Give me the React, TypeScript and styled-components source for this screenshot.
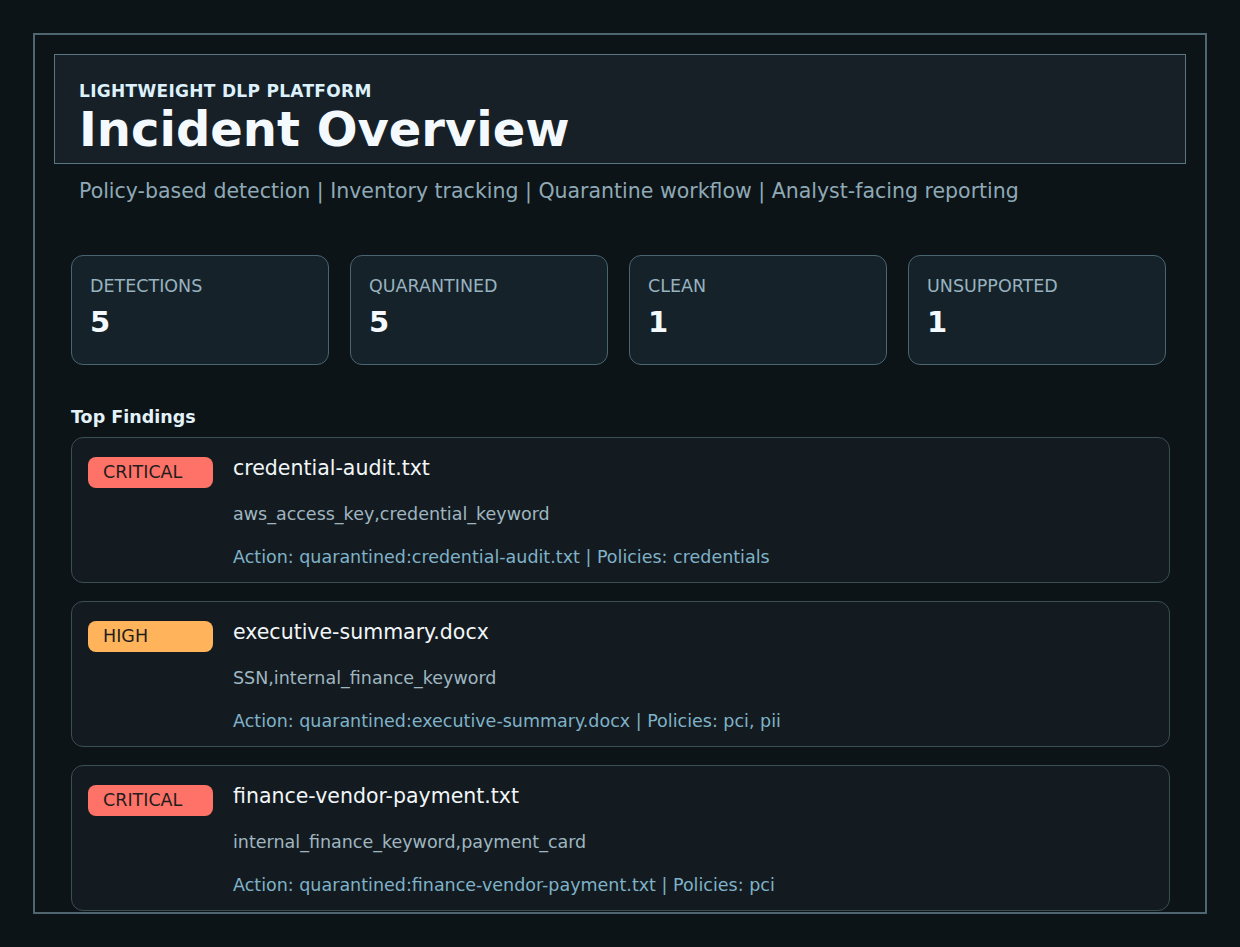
import React from "react";
import styled, { createGlobalStyle } from "styled-components";

const Global = createGlobalStyle`
  html, body { margin: 0; background: #0c1417; }
  body { font-family: "DejaVu Sans", "Noto Sans", sans-serif; }
`;

const Page = styled.div`
  padding: 33px;
  box-sizing: border-box;
`;

const Frame = styled.div`
  box-sizing: border-box;
  height: 881px;
  border: 2px solid #4f6570;
  padding: 19px 19px 0;
  overflow: hidden;
  background: #0c1417;
`;

const Header = styled.header`
  box-sizing: border-box;
  height: 110px;
  background: #172027;
  border: 1px solid #5a7682;
  padding: 25px 24px 0;
`;

const Eyebrow = styled.div`
  font-size: 17px;
  font-weight: bold;
  color: #dcf1fb;
  letter-spacing: 0.3px;
  line-height: 22px;
`;

const Title = styled.h1`
  margin: 0;
  font-size: 48px;
  line-height: 54px;
  font-weight: bold;
  color: #f3f9fc;
`;

const Sub = styled.p`
  margin: 14px 0 0 25px;
  font-size: 20.5px;
  line-height: 26px;
  color: #8fa9b6;
`;

const Body = styled.div`
  padding: 0 17px;
`;

const Stats = styled.div`
  display: grid;
  grid-template-columns: repeat(4, 258px);
  gap: 21px;
  margin-top: 51px;
`;

const Stat = styled.div`
  box-sizing: border-box;
  height: 110px;
  background: #15222a;
  border: 1px solid #4a6470;
  border-radius: 12px;
  padding: 18px 18px 0;
`;

const StatLabel = styled.div`
  font-size: 17.5px;
  line-height: 24px;
  color: #98b2bf;
`;

const StatValue = styled.div`
  font-size: 29px;
  font-weight: bold;
  color: #f3f9fc;
  line-height: 36px;
  margin-top: 6px;
`;

const SectionTitle = styled.h2`
  margin: 41px 0 9px;
  font-size: 17.5px;
  line-height: 22px;
  font-weight: bold;
  color: #e3f2f8;
`;

const List = styled.div`
  display: flex;
  flex-direction: column;
  gap: 18px;
`;

const Card = styled.div`
  box-sizing: border-box;
  width: 1099px;
  height: 146px;
  background: #141b20;
  border: 1px solid #3b4d55;
  border-radius: 12px;
  padding: 18px 16px 0;
  display: flex;
  gap: 20px;
`;

const Badge = styled.div<{ $c: string }>`
  flex: none;
  box-sizing: border-box;
  width: 125px;
  height: 31px;
  margin-top: 1px;
  border-radius: 8px;
  background: ${p => p.$c};
  color: #1d1d1d;
  font-size: 17.5px;
  line-height: 31px;
  padding-left: 15px;
`;

const Info = styled.div`
  display: flex;
  flex-direction: column;
`;

const File = styled.div`
  font-size: 20.5px;
  line-height: 24px;
  color: #f1f6f8;
`;

const Keys = styled.div`
  margin-top: 23px;
  font-size: 17.5px;
  line-height: 22px;
  color: #9fb6c1;
`;

const Action = styled.div`
  margin-top: 21px;
  font-size: 17.5px;
  line-height: 22px;
  color: #7fb2c8;
`;

const stats = [
  ["DETECTIONS", "5"],
  ["QUARANTINED", "5"],
  ["CLEAN", "1"],
  ["UNSUPPORTED", "1"],
];

const findings = [
  { sev: "CRITICAL", c: "#ff7267", file: "credential-audit.txt", keys: "aws_access_key,credential_keyword", action: "Action: quarantined:credential-audit.txt | Policies: credentials" },
  { sev: "HIGH", c: "#ffb45c", file: "executive-summary.docx", keys: "SSN,internal_finance_keyword", action: "Action: quarantined:executive-summary.docx | Policies: pci, pii" },
  { sev: "CRITICAL", c: "#ff7267", file: "finance-vendor-payment.txt", keys: "internal_finance_keyword,payment_card", action: "Action: quarantined:finance-vendor-payment.txt | Policies: pci" },
];

export default function App() {
  return (
    <Page>
      <Global />
      <Frame>
        <Header>
          <Eyebrow>LIGHTWEIGHT DLP PLATFORM</Eyebrow>
          <Title>Incident Overview</Title>
        </Header>
        <Sub>Policy-based detection | Inventory tracking | Quarantine workflow | Analyst-facing reporting</Sub>
        <Body>
          <Stats>
            {stats.map(([l, v]) => (
              <Stat key={l}>
                <StatLabel>{l}</StatLabel>
                <StatValue>{v}</StatValue>
              </Stat>
            ))}
          </Stats>
          <SectionTitle>Top Findings</SectionTitle>
          <List>
            {findings.map(f => (
              <Card key={f.file}>
                <Badge $c={f.c}>{f.sev}</Badge>
                <Info>
                  <File>{f.file}</File>
                  <Keys>{f.keys}</Keys>
                  <Action>{f.action}</Action>
                </Info>
              </Card>
            ))}
          </List>
        </Body>
      </Frame>
    </Page>
  );
}
